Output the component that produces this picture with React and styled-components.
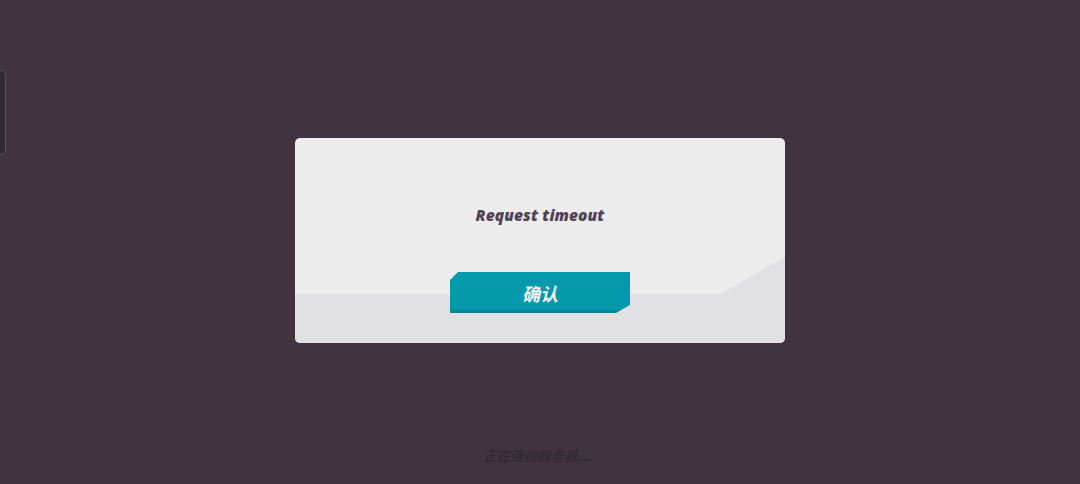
import styled, { createGlobalStyle } from 'styled-components';

const GlobalStyle = createGlobalStyle`
  html, body {
    margin: 0;
    padding: 0;
    background-color: #41333f;
  }
  * {
    box-sizing: border-box;
  }
`;

const Page = styled.div`
  position: relative;
  width: 100%;
  height: 100vh;
  display: flex;
  flex-direction: column;
  align-items: center;
  padding-top: 138px;
  overflow: hidden;
  font-family: 'Open Sans', 'Noto Sans CJK SC', sans-serif;
`;

const SidePanel = styled.div`
  position: absolute;
  left: -20px;
  top: 70px;
  width: 26px;
  height: 85px;
  border: 1px solid #4d5862;
  border-radius: 5px;
  background-color: #342936;
`;

const Dialog = styled.div`
  position: relative;
  width: 490px;
  height: 205px;
  border-radius: 5px;
  background-color: #ececec;
  display: flex;
  flex-direction: column;
  align-items: center;
  padding-top: 65px;
  overflow: hidden;
  &::before {
    content: '';
    position: absolute;
    inset: 0;
    background-color: #e1e0e2;
    clip-path: polygon(0 156px, 425px 156px, 490px 119px, 490px 205px, 0 205px);
  }
`;

const Message = styled.div`
  position: relative;
  font-size: 15.5px;
  font-weight: 800;
  font-style: italic;
  color: #514255;
  line-height: 24px;
  letter-spacing: 0.1px;
`;

const ConfirmButton = styled.button`
  position: relative;
  margin-top: 45px;
  width: 180px;
  height: 41px;
  border: none;
  padding: 0;
  background: linear-gradient(#049aad 0, #0398aa 38px, #0a8797 38px);
  clip-path: polygon(8px 0, 100% 0, 100% 33px, 166px 100%, 0 100%, 0 8px);
  color: #f4f4f4;
  font-family: 'Noto Sans CJK SC', sans-serif;
  font-size: 18px;
  font-weight: 700;
  font-style: italic;
  line-height: 40px;
  cursor: pointer;
`;

const Status = styled.div`
  margin-top: auto;
  margin-bottom: 19px;
  margin-right: 6px;
  font-family: 'Noto Sans CJK SC', sans-serif;
  font-size: 13.5px;
  font-weight: 700;
  font-style: italic;
  color: #322a35;
`;

export default function App() {
  return (
    <>
      <GlobalStyle />
      <Page>
        <SidePanel />
        <Dialog>
          <Message>Request timeout</Message>
          <ConfirmButton>确认</ConfirmButton>
        </Dialog>
        <Status>正在连接服务器...</Status>
      </Page>
    </>
  );
}
